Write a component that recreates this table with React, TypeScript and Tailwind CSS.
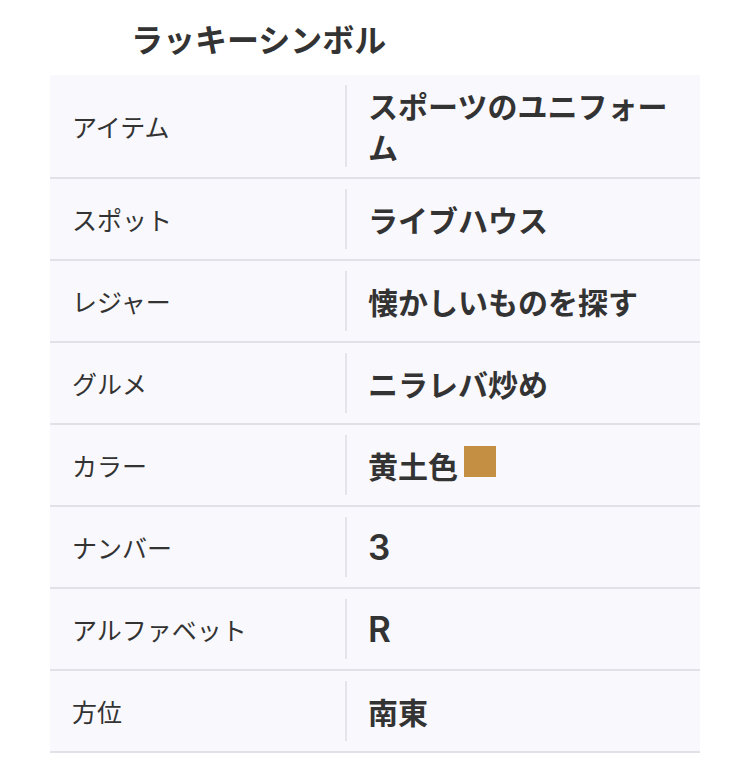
import React from "react";

const rows: { label: string; value: string; latin?: boolean; swatch?: string }[] = [
  { label: "アイテム", value: "スポーツのユニフォーム" },
  { label: "スポット", value: "ライブハウス" },
  { label: "レジャー", value: "懐かしいものを探す" },
  { label: "グルメ", value: "ニラレバ炒め" },
  { label: "カラー", value: "黄土色", swatch: "#c48f42" },
  { label: "ナンバー", value: "3", latin: true },
  { label: "アルファベット", value: "R", latin: true },
  { label: "方位", value: "南東" },
];

export default function App() {
  return (
    <div
      className="min-h-[775px] w-[750px] bg-white text-[#333333]"
      style={{ fontFamily: '"Noto Sans CJK JP", "Noto Sans", sans-serif' }}
    >
      <div className="pl-[131px] pt-[16px] h-[75px] text-[32px] font-bold leading-[44px]">
        ラッキーシンボル
      </div>
      <div className="mx-[50px] w-[650px]">
        {rows.map((r) => (
          <div
            key={r.label}
            className="flex bg-[#f9f8fc] border-b-2 border-[#e3e1e7]"
          >
            <div className="w-[295px] shrink-0 flex items-center pl-[22px] text-[25px] font-normal leading-[41px]">
              {r.label}
            </div>
            <div className="my-[10px] flex-1 min-h-[60px] border-l-2 border-[#e6e4ea] flex items-center pl-[21px] pr-[20px]">
              {r.latin ? (
                <div className="font-['Inter',sans-serif] text-[35px] font-semibold leading-[41px]">
                  {r.value}
                </div>
              ) : (
                <div className="text-[30px] font-bold leading-[41px]">
                  {r.value}
                  {r.swatch && (
                    <span
                      className="inline-block w-[32px] h-[31px] ml-[6px] align-[1px]"
                      style={{ backgroundColor: r.swatch }}
                    />
                  )}
                </div>
              )}
            </div>
          </div>
        ))}
      </div>
    </div>
  );
}
